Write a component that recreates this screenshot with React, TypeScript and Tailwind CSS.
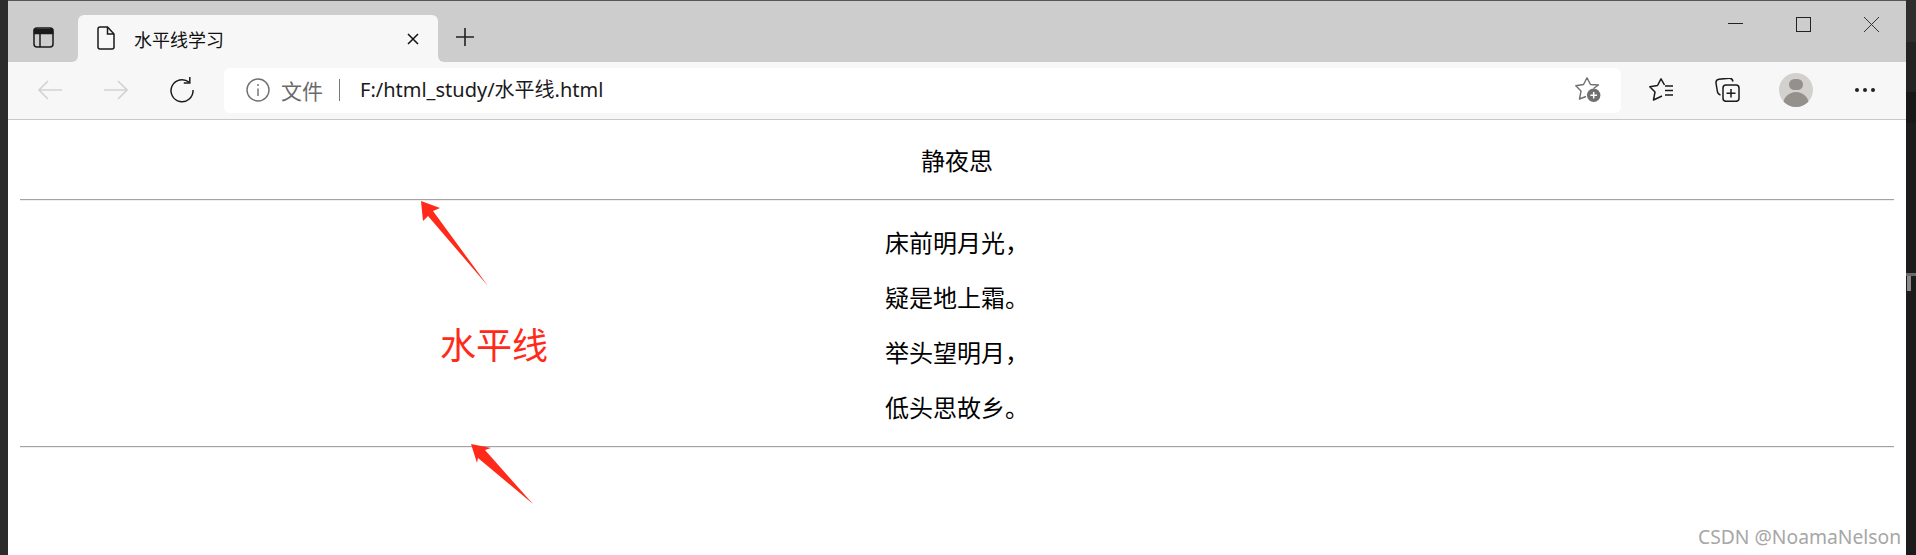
import React from 'react';

const CJK = "font-['Noto_Sans_CJK_SC','Noto_Sans',sans-serif]";

const poem = ['床前明月光，', '疑是地上霜。', '举头望明月，', '低头思故乡。'];

const Divider = () => <div className="mx-3 h-[2px] border-t border-b border-t-[#a3a3a3] border-b-[#eeeeee]" />;

const TabBar = () => (
  <div className="flex h-[61px] shrink-0 items-end bg-[#cdcdcd]">
    <div className="h-[47px] w-[70px] shrink-0 bg-[#f7f7f7]">
      <div className="flex h-full items-start justify-center rounded-br-md bg-[#cdcdcd] pt-[12px]">
        <svg width="21" height="21" viewBox="0 0 21 21" fill="none" stroke="#1a1a1a" strokeWidth="1.5">
          <rect x="1" y="1" width="19" height="19" rx="3" />
          <path d="M1.5 2.5h18V6.5h-18z" fill="#1a1a1a" />
          <path d="M7 6.5v13.5" />
        </svg>
      </div>
    </div>
    <div className="flex h-[47px] w-[360px] shrink-0 items-center rounded-t-md bg-[#f7f7f7] pl-[19px] pr-[19px]">
      <svg width="18" height="24" viewBox="0 0 18 24" fill="none" stroke="#1a1a1a" strokeWidth="1.5" className="mb-[2px]">
        <path d="M3 1h7.5L17 8v13a2 2 0 0 1-2 2H3a2 2 0 0 1-2-2V3a2 2 0 0 1 2-2z" />
        <path d="M10.5 1v7H17" />
      </svg>
      <span className={`ml-[19px] text-[18px] leading-none text-[#111] ${CJK}`}>水平线学习</span>
      <svg width="12" height="12" viewBox="0 0 12 12" stroke="#111" strokeWidth="1.5" className="ml-auto">
        <path d="M1 1l10 10M11 1L1 11" />
      </svg>
    </div>
    <div className="h-[61px] min-w-0 flex-1 self-end bg-[linear-gradient(to_bottom,#cdcdcd_50%,#f7f7f7_50%)]">
      <div className="flex h-full items-start rounded-bl-md bg-[#cdcdcd] pl-[18px] pr-[27px]">
        <svg width="18" height="18" viewBox="0 0 18 18" stroke="#222" strokeWidth="1.6" className="mt-[27px]">
          <path d="M9 0v18M0 9h18" />
        </svg>
        <div className="ml-auto flex items-start gap-[53px] pt-[16px]">
          <svg width="15" height="15" viewBox="0 0 15 15" stroke="#222" strokeWidth="1">
            <path d="M0 6.5h15" />
          </svg>
          <svg width="15" height="15" viewBox="0 0 15 15" fill="none" stroke="#222" strokeWidth="1">
            <rect x="0.5" y="0.5" width="14" height="14" />
          </svg>
          <svg width="15" height="15" viewBox="0 0 15 15" stroke="#333" strokeWidth="1">
            <path d="M0 0l15 15M15 0L0 15" />
          </svg>
        </div>
      </div>
    </div>
  </div>
);

const Toolbar = () => (
  <div className="flex h-[58px] shrink-0 items-center border-b border-b-[#c8c8c8] bg-[#f7f7f7] pb-[1px]">
    <svg width="24" height="20" viewBox="0 0 24 20" fill="none" stroke="#d2d2d2" strokeWidth="1.6" className="ml-[30px]">
      <path d="M24 10H1M10 1l-9 9 9 9" />
    </svg>
    <svg width="24" height="20" viewBox="0 0 24 20" fill="none" stroke="#d2d2d2" strokeWidth="1.6" className="ml-[42px]">
      <path d="M0 10h23M14 1l9 9-9 9" />
    </svg>
    <svg width="26" height="26" viewBox="0 0 26 26" fill="none" stroke="#1c1c1c" strokeWidth="1.5" className="ml-[41px]">
      <path d="M20 5.2A11 11 0 1 0 24 13" />
      <path d="M20.8 0v6h-6" />
    </svg>
    <div className="ml-[29px] flex h-[45px] w-[1397px] shrink-0 items-center rounded-md bg-white pl-[22px] pr-[20px]">
      <svg width="24" height="24" viewBox="0 0 24 24" fill="none" stroke="#6f6f6f" strokeWidth="1.4">
        <circle cx="12" cy="12" r="11" />
        <path d="M12 10.5v7.5M12 6v2" />
      </svg>
      <span className={`ml-[11px] text-[21px] leading-none text-[#6a6a6a] ${CJK}`}>文件</span>
      <div className="ml-[16px] h-[22px] w-[1px] bg-[#777]" />
      <span className="ml-[20px] text-[20px] leading-none text-[#1a1a1a] font-['Noto_Sans','Noto_Sans_CJK_SC',sans-serif]">
        F:/html_study/水平线.html
      </span>
      <svg width="26" height="26" viewBox="0 0 26 26" fill="none" className="ml-auto">
        <path
          d="M18.5 11.5L23.5 8l-8-.5L12 .8 8.5 7.5.8 8.8 6 14l-1.5 8 6.5-2.5"
          stroke="#6f6f6f"
          strokeWidth="1.4"
          strokeLinejoin="round"
        />
        <circle cx="18.7" cy="18.3" r="6.7" fill="#6f6f6f" />
        <path d="M18.7 15v6.6M15.4 18.3H22" stroke="#fff" strokeWidth="1.5" />
      </svg>
    </div>
    <svg width="24" height="24" viewBox="0 0 24 24" fill="none" stroke="#1a1a1a" strokeWidth="1.5" className="ml-[28px]">
      <path d="M15.5 7L12 .8 8.5 7.5.8 8.8 6 14l-1.5 8L13 18" strokeLinejoin="round" />
      <path d="M16 8h8M16 12.5h8M16 17h8" />
    </svg>
    <svg width="25" height="24" viewBox="0 0 25 24" fill="none" stroke="#1a1a1a" strokeWidth="1.5" className="ml-[42px]">
      <path d="M5.5 17C3.5 16.5 2.5 15 2.3 13L1 5C.8 3 2 1.5 4 1.2L14 .2C16 0 17.5 1 18 3.5" />
      <rect x="8" y="7" width="16" height="16.3" rx="3" />
      <path d="M16 11v8.5M11.5 15.2h9" />
    </svg>
    <div className="ml-[39px] flex h-[34px] w-[34px] shrink-0 flex-col items-center overflow-hidden rounded-full bg-[#d3d1cd]">
      <div className="mt-[6px] h-[14px] w-[14px] rounded-full bg-[#94908b]" />
      <div className="mt-[2px] h-[20px] w-[26px] rounded-t-full bg-[#94908b]" />
    </div>
    <div className="ml-[42px] flex gap-[4px]">
      <div className="h-[4px] w-[4px] rounded-full bg-[#222]" />
      <div className="h-[4px] w-[4px] rounded-full bg-[#222]" />
      <div className="h-[4px] w-[4px] rounded-full bg-[#222]" />
    </div>
  </div>
);

export default function App() {
  return (
    <div className="relative flex h-[555px] w-[1916px] overflow-hidden bg-white">
      <div className="w-2 shrink-0 bg-[#2b2b2b]" />
      <div className="flex min-w-0 flex-1 flex-col">
        <div className="h-[1px] shrink-0 bg-[#555]" />
        <TabBar />
        <Toolbar />
        <div className={`flex-1 bg-white text-center text-black ${CJK}`}>
          <div className="flex h-[79px] items-center justify-center text-[24px] leading-none">静夜思</div>
          <Divider />
          <div className="pb-[12px] pt-[13px] text-[24px] leading-[55px]">
            {poem.map((line) => (
              <p key={line}>{line}</p>
            ))}
          </div>
          <Divider />
        </div>
      </div>
      <div className="flex w-[10px] shrink-0 flex-col bg-[#1c1c1c]">
        <div className="h-[42px] bg-[#2e2e2e]" />
        <div className="h-[50px] bg-[#232323]" />
        <div className="h-[31px] bg-[#181818]" />
        <div className="mt-[150px] h-[3px] bg-[#6a6a6a]" />
        <div className="ml-[1px] h-[15px] w-[4px] bg-[#8a8a8a]" />
      </div>

      <svg width="70" height="86" viewBox="0 0 70 86" className="absolute left-[420px] top-[200px]">
        <polygon points="1,1 20,8 13,11 68,86 8,16 3,21" fill="#ff2a1a" />
      </svg>
      <span className={`absolute left-[440px] top-[322px] text-[36px] leading-[42px] text-[#ff2a1a] ${CJK}`}>水平线</span>
      <svg width="64" height="62" viewBox="0 0 64 62" className="absolute left-[470px] top-[443px]">
        <polygon points="1,1 21,5 15,7 63,61 8,15 7,20" fill="#ff2a1a" />
      </svg>
      <span className="absolute left-[1698px] top-[525px] text-[19.3px] leading-[24px] text-[#a6a6a6] font-['Noto_Sans',sans-serif]">
        CSDN @NoamaNelson
      </span>
    </div>
  );
}
